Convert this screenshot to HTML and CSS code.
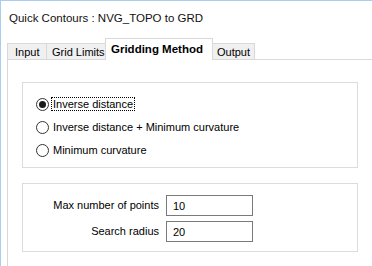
FILE: index.html
```html
<!DOCTYPE html>
<html lang="en">
<head>
    <meta charset="UTF-8">
    <title>Quick Contours : NVG_TOPO to GRD</title>
    <link rel="stylesheet" href="styles.css">
</head>
<body>
    <div class="window">
        <div class="title">Quick Contours : NVG_TOPO to GRD</div>

        <div class="tabs">
            <div class="tab tab-input">Input</div>
            <div class="tab tab-limits">Grid Limits</div>
            <div class="tab tab-method active">Gridding Method</div>
            <div class="tab tab-output">Output</div>
        </div>

        <div class="panel">
            <div class="group methods">
                <div class="option">
                    <span class="radio checked"></span>
                    <span class="label focus">Inverse distance</span>
                </div>
                <div class="option">
                    <span class="radio"></span>
                    <span class="label">Inverse distance + Minimum curvature</span>
                </div>
                <div class="option">
                    <span class="radio"></span>
                    <span class="label">Minimum curvature</span>
                </div>
            </div>

            <div class="group params">
                <label class="field-label" for="maxPoints">Max number of points</label>
                <input class="field" type="text" id="maxPoints" value="10">
                <label class="field-label" for="radius">Search radius</label>
                <input class="field" type="text" id="radius" value="20">
            </div>
        </div>
    </div>
</body>
</html>
```

FILE: styles.css
```css
body {
    margin: 0;
    font-family: "Liberation Sans", Arial, sans-serif;
    font-size: 11px;
    color: #000;
    background-color: #fff;
}
.window {
    height: 266px;
    box-sizing: border-box;
    border-top: 1px solid #a9cdef;
    border-left: 1px solid #a9cdef;
    overflow: hidden;
}
.title {
    height: 37px;
    padding: 10px 0 0 8px;
    box-sizing: border-box;
    line-height: 15px;
    font-size: 11.5px;
    color: #111;
}
.tabs {
    display: flex;
    align-items: flex-end;
    height: 21px;
    margin-left: 6px;
}
.tab {
    height: 16px;
    box-sizing: border-box;
    border: 1px solid #d9d9d9;
    border-bottom: none;
    border-right: none;
    background-color: #f0f0f0;
    line-height: 16px;
    padding-left: 7px;
    white-space: nowrap;
}
.tab-input { width: 39px; }
.tab-limits {
    width: 59px;
    padding-left: 5px;
}
.tab-method { width: 108px; }
.tab-output {
    width: 42px;
    border-right: 1px solid #d9d9d9;
    padding-left: 4px;
}
.tab.active {
    height: 22px;
    margin-bottom: -1px;
    background-color: #fff;
    border-right: 1px solid #d9d9d9;
    font-weight: bold;
    font-size: 11.5px;
    line-height: 20px;
    padding-left: 5px;
    position: relative;
}
.tab.active + .tab {
    border-left: none;
}
.panel {
    margin-left: 6px;
    height: 300px;
    border-top: 1px solid #d9d9d9;
    border-left: 1px solid #d9d9d9;
    padding: 22px 0 0 14px;
}
.group {
    width: 336px;
    box-sizing: border-box;
    border: 1px solid #dcdcdc;
}
.methods {
    height: 86px;
    padding: 14px 0 0 13px;
}
.option {
    display: flex;
    align-items: center;
    height: 14px;
    margin-bottom: 9px;
}
.radio {
    width: 13px;
    height: 13px;
    box-sizing: border-box;
    border: 1px solid #333;
    border-radius: 50%;
    background-color: #fff;
    display: flex;
    align-items: center;
    justify-content: center;
    margin-right: 2px;
}
.radio.checked::after {
    content: "";
    width: 7px;
    height: 7px;
    border-radius: 50%;
    background-color: #1a1a1a;
}
.label {
    padding: 0 1px;
    line-height: 12px;
    border: 1px solid transparent;
}
.label.focus {
    border: 1px dotted #000;
}
.params {
    margin-top: 15px;
    height: 69px;
    display: grid;
    grid-template-columns: 136px 87px;
    column-gap: 7px;
    row-gap: 5px;
    align-content: start;
    padding-top: 11px;
}
.field-label {
    text-align: right;
    line-height: 21px;
}
.field {
    width: 87px;
    height: 21px;
    box-sizing: border-box;
    border: 1px solid #7a7a7a;
    padding: 0 0 0 6px;
    font-family: "Liberation Sans", Arial, sans-serif;
    font-size: 11px;
    margin: 0;
}
```
